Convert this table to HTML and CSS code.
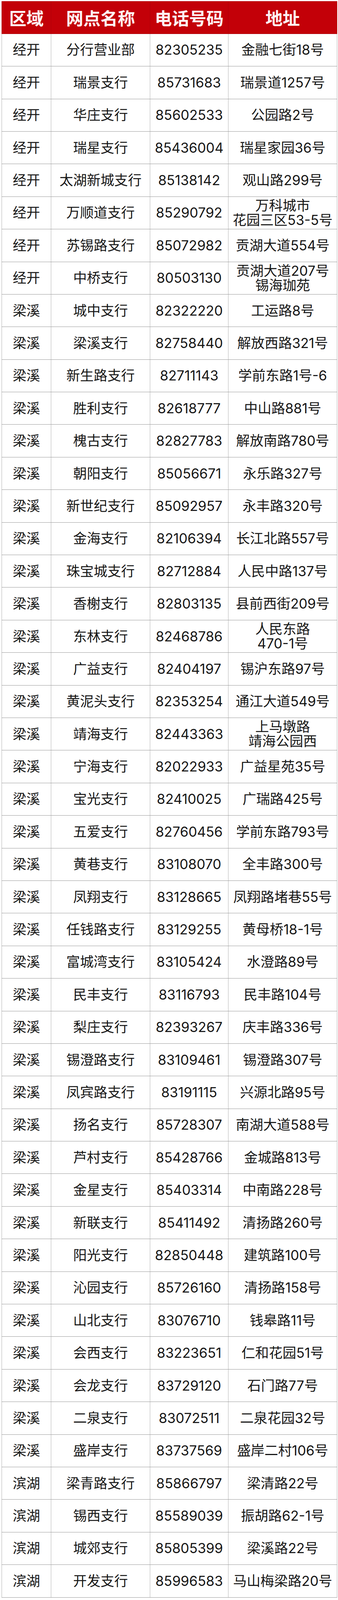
FILE: index.html
```html
<!DOCTYPE html>
<html lang="zh-CN">
<head>
<meta charset="utf-8">
<title>网点信息</title>
<link rel="stylesheet" href="styles.css">
</head>
<body>
<table class="branches">
  <colgroup>
    <col class="c-area">
    <col class="c-name">
    <col class="c-tel">
    <col class="c-addr">
  </colgroup>
  <thead>
    <tr><th>区域</th><th>网点名称</th><th>电话号码</th><th>地址</th></tr>
  </thead>
  <tbody>
    <tr><td>经开</td><td>分行营业部</td><td>82305235</td><td>金融七街18号</td></tr>
    <tr><td>经开</td><td>瑞景支行</td><td>85731683</td><td>瑞景道1257号</td></tr>
    <tr><td>经开</td><td>华庄支行</td><td>85602533</td><td>公园路2号</td></tr>
    <tr><td>经开</td><td>瑞星支行</td><td>85436004</td><td>瑞星家园36号</td></tr>
    <tr><td>经开</td><td>太湖新城支行</td><td>85138142</td><td>观山路299号</td></tr>
    <tr><td>经开</td><td>万顺道支行</td><td>85290792</td><td>万科城市<br>花园三区53-5号</td></tr>
    <tr><td>经开</td><td>苏锡路支行</td><td>85072982</td><td>贡湖大道554号</td></tr>
    <tr><td>经开</td><td>中桥支行</td><td>80503130</td><td>贡湖大道207号<br>锡海珈苑</td></tr>
    <tr><td>梁溪</td><td>城中支行</td><td>82322220</td><td>工运路8号</td></tr>
    <tr><td>梁溪</td><td>梁溪支行</td><td>82758440</td><td>解放西路321号</td></tr>
    <tr><td>梁溪</td><td>新生路支行</td><td>82711143</td><td>学前东路1号-6</td></tr>
    <tr><td>梁溪</td><td>胜利支行</td><td>82618777</td><td>中山路881号</td></tr>
    <tr><td>梁溪</td><td>槐古支行</td><td>82827783</td><td>解放南路780号</td></tr>
    <tr><td>梁溪</td><td>朝阳支行</td><td>85056671</td><td>永乐路327号</td></tr>
    <tr><td>梁溪</td><td>新世纪支行</td><td>85092957</td><td>永丰路320号</td></tr>
    <tr><td>梁溪</td><td>金海支行</td><td>82106394</td><td>长江北路557号</td></tr>
    <tr><td>梁溪</td><td>珠宝城支行</td><td>82712884</td><td>人民中路137号</td></tr>
    <tr><td>梁溪</td><td>香榭支行</td><td>82803135</td><td>县前西街209号</td></tr>
    <tr><td>梁溪</td><td>东林支行</td><td>82468786</td><td>人民东路<br>470-1号</td></tr>
    <tr><td>梁溪</td><td>广益支行</td><td>82404197</td><td>锡沪东路97号</td></tr>
    <tr><td>梁溪</td><td>黄泥头支行</td><td>82353254</td><td>通江大道549号</td></tr>
    <tr><td>梁溪</td><td>靖海支行</td><td>82443363</td><td>上马墩路<br>靖海公园西</td></tr>
    <tr><td>梁溪</td><td>宁海支行</td><td>82022933</td><td>广益星苑35号</td></tr>
    <tr><td>梁溪</td><td>宝光支行</td><td>82410025</td><td>广瑞路425号</td></tr>
    <tr><td>梁溪</td><td>五爱支行</td><td>82760456</td><td>学前东路793号</td></tr>
    <tr><td>梁溪</td><td>黄巷支行</td><td>83108070</td><td>全丰路300号</td></tr>
    <tr><td>梁溪</td><td>凤翔支行</td><td>83128665</td><td>凤翔路堵巷55号</td></tr>
    <tr><td>梁溪</td><td>任钱路支行</td><td>83129255</td><td>黄母桥18-1号</td></tr>
    <tr><td>梁溪</td><td>富城湾支行</td><td>83105424</td><td>水澄路89号</td></tr>
    <tr><td>梁溪</td><td>民丰支行</td><td>83116793</td><td>民丰路104号</td></tr>
    <tr><td>梁溪</td><td>梨庄支行</td><td>82393267</td><td>庆丰路336号</td></tr>
    <tr><td>梁溪</td><td>锡澄路支行</td><td>83109461</td><td>锡澄路307号</td></tr>
    <tr><td>梁溪</td><td>凤宾路支行</td><td>83191115</td><td>兴源北路95号</td></tr>
    <tr><td>梁溪</td><td>扬名支行</td><td>85728307</td><td>南湖大道588号</td></tr>
    <tr><td>梁溪</td><td>芦村支行</td><td>85428766</td><td>金城路813号</td></tr>
    <tr><td>梁溪</td><td>金星支行</td><td>85403314</td><td>中南路228号</td></tr>
    <tr><td>梁溪</td><td>新联支行</td><td>85411492</td><td>清扬路260号</td></tr>
    <tr><td>梁溪</td><td>阳光支行</td><td>82850448</td><td>建筑路100号</td></tr>
    <tr><td>梁溪</td><td>沁园支行</td><td>85726160</td><td>清扬路158号</td></tr>
    <tr><td>梁溪</td><td>山北支行</td><td>83076710</td><td>钱皋路11号</td></tr>
    <tr><td>梁溪</td><td>会西支行</td><td>83223651</td><td>仁和花园51号</td></tr>
    <tr><td>梁溪</td><td>会龙支行</td><td>83729120</td><td>石门路77号</td></tr>
    <tr><td>梁溪</td><td>二泉支行</td><td>83072511</td><td>二泉花园32号</td></tr>
    <tr><td>梁溪</td><td>盛岸支行</td><td>83737569</td><td>盛岸二村106号</td></tr>
    <tr><td>滨湖</td><td>梁青路支行</td><td>85866797</td><td>梁清路22号</td></tr>
    <tr><td>滨湖</td><td>锡西支行</td><td>85589039</td><td>振胡路62-1号</td></tr>
    <tr><td>滨湖</td><td>城郊支行</td><td>85805399</td><td>梁溪路22号</td></tr>
    <tr><td>滨湖</td><td>开发支行</td><td>85996583</td><td>马山梅梁路20号</td></tr>
  </tbody>
</table>
</body>
</html>
```

FILE: styles.css
```css
html, body {
  margin: 0;
  padding: 0;
  background: #ffffff;
}

body {
  padding: 3px 3px 0 4px;
  font-family: Inter, "Noto Sans CJK SC", "Noto Sans", sans-serif;
  color: #161616;
}

.branches {
  width: 857px;
  border-collapse: collapse;
  table-layout: fixed;
}

.c-area { width: 126px; }
.c-name { width: 253px; }
.c-tel  { width: 200px; }
.c-addr { width: 278px; }

.branches th,
.branches td {
  padding: 0;
  text-align: center;
  vertical-align: middle;
  white-space: nowrap;
  overflow: hidden;
}

.branches thead tr {
  height: 82.8px;
}

.branches th {
  background: #c30008;
  color: #fff3f5;
  font-family: "Noto Sans CJK SC", sans-serif;
  font-size: 44px;
  font-weight: 700;
  line-height: 50px;
  border: 1px solid #b00008;
  border-bottom-color: #a50008;
}

.branches tbody tr {
  height: 83.4px;
}

.branches td {
  font-size: 35px;
  font-weight: 400;
  line-height: 37px;
  border-top: 1px solid #9a9a9a;
  border-bottom: 1px solid #9a9a9a;
  border-left: 1px solid #b2b2b2;
  border-right: 1px solid #b2b2b2;
}
```
